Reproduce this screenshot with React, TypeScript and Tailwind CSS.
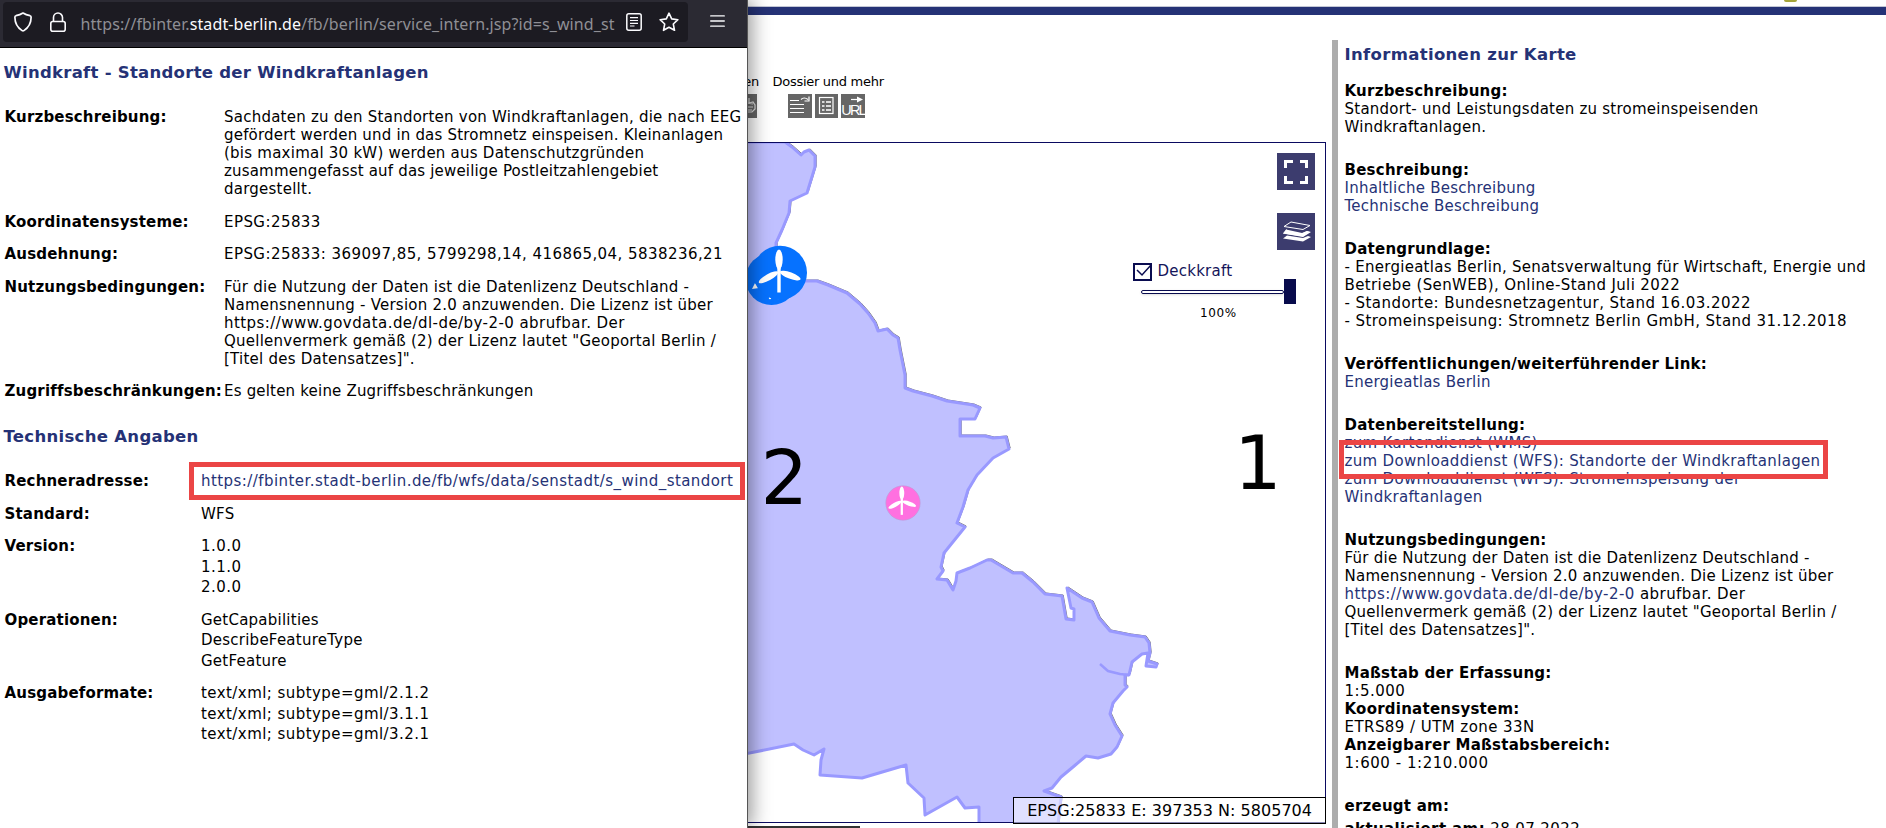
import type { ReactNode } from "react";

const land =
  "M740 142H785L792 147L801 155L804 152L809 150L815 156L815 167L811 180L807 193L790 201L789 213L782 230L776 243L776 275L805 281L817 281L828 285L847 293L860 304L868 313L875 323L878 331L887 329L893 335L898 338L900 350L903 365L905 375L905 388L913 391L932 396L947 401L973 405L980 408L975 419L960 419V436L985 436L993 438L1006 437L1009 449L993 458L977 475L968 490L963 507L957 523L965 527L944 553L941 567L943 571L937 579L947 580L953 590L956 581L957 573L970 568L987 560L991 560L1013 573L1022 573L1033 582L1045 594L1062 596L1066 619L1074 620V609L1071 608L1067 588L1082 598L1092 602L1099 618L1110 631L1130 635L1145 637L1149 643L1150 653L1148 661L1157 664L1156 667L1146 666L1148 653L1142 654L1132 662L1129 675H1125V685L1127 687L1123 691L1113 703L1110 714L1115 725L1122 736L1117 747L1111 754L1098 758L1086 756L1073 767L1061 777L1052 788L1044 791L1061 797L1058 824H979V807L965 808L957 797L925 815L924 798L908 783L906 765L862 778L820 775L821 760L824 749L814 755L803 750L794 744L740 755Z";

function Turbine() {
  return (
    <g fill="#fff">
      <ellipse cx="0" cy="-12" rx="3.7" ry="10" />
      <ellipse cx="0" cy="-12" rx="3.2" ry="11" transform="rotate(-119)" />
      <ellipse cx="0" cy="-12" rx="3.2" ry="11" transform="rotate(110)" />
      <rect x="-1.7" y="-4" width="3.4" height="25" />
    </g>
  );
}

function MapDrawing() {
  return (
    <svg className="absolute inset-0 h-full w-full" viewBox="747 143 578 679" preserveAspectRatio="none">
      <path d={land} fill="none" stroke="#777" strokeWidth="1" transform="translate(1.2 -1)" />
      <path d={land} fill="#c0c0ff" stroke="#9999ff" strokeWidth="3" strokeLinejoin="round" />
      <path d="M1100 664L1108 671L1120 674L1129 675" fill="none" stroke="#9999ff" strokeWidth="2.5" />
      <circle cx="771.5" cy="279" r="26" fill="#0672ff" />
      <path d="M752 289l3-6 4 5z" fill="#fff" />
      <path d="M756 262q-3 16 5 26t18 11" fill="none" stroke="#4d97ff" strokeWidth="0.8" />
      <circle cx="770" cy="298" r="1.2" fill="#fff" />
      <circle cx="780" cy="272.700" r="27" fill="#0672ff" />
      <g transform="translate(779 271.500)">
        <Turbine />
      </g>
      <circle cx="903" cy="503" r="17.200" fill="#ff70e0" stroke="#b8a0d8" strokeWidth="0.6" />
      <g transform="translate(901.800 501) scale(.66)">
        <Turbine />
      </g>
    </svg>
  );
}

function BrowserBar() {
  return (
    <div className="h-12 border-b border-black bg-[#2b2a33] pt-0.5 pl-[3px]">
      <div className="flex">
        <div className="flex h-10 w-[685px] items-center rounded-[4px] bg-[#1c1b22] pl-[11px] text-[#fbfbfe]">
          <svg className="h-5 w-[18px] shrink-0" viewBox="0 0 18 20" fill="none" stroke="currentColor" strokeWidth="1.700" strokeLinejoin="round">
            <path d="M9 1Q12 3 16 3.700Q17.200 4 17.100 5.500Q17 14 9.900 18.600Q9 19.200 8.100 18.600Q1 14 .9 5.500Q.8 4 2 3.700Q6 3 9 1Z" />
          </svg>
          <svg className="ml-[18px] h-5 w-4 shrink-0" viewBox="0 0 16 20" fill="none" stroke="currentColor" strokeWidth="1.600">
            <rect x=".8" y="9.500" width="14.400" height="9.700" rx="2" />
            <path d="M3.500 9.500V5.500a4.500 4.500 0 0 1 9 0v4" />
          </svg>
          <div className="ml-[14.500px] w-[536px] shrink-0 overflow-hidden pt-1 font-['Noto_Sans',sans-serif] text-[16px] leading-6 tracking-[0.1px] whitespace-nowrap text-[#8f8f95]">
            <span>https://fbinter.</span>
            <span className="text-[#fbfbfe]">stadt-berlin.de</span>
            <span>/fb/berlin/service_intern.jsp?id=s_wind_st</span>
          </div>
          <svg className="ml-[9px] h-[18px] w-4 shrink-0" viewBox="0 0 16 18" fill="none" stroke="currentColor" strokeWidth="1.500">
            <rect x=".8" y=".8" width="14.400" height="16.400" rx="2" />
            <path d="M4 4.700h8M4 7.500h8M4 10.300h8M4 13h4.500" strokeWidth="1.200" />
          </svg>
          <svg className="ml-[17px] h-5 w-5 shrink-0" viewBox="0 0 20 20" fill="none" stroke="currentColor" strokeWidth="1.600" strokeLinejoin="round">
            <path d="M10 1.200l2.700 5.700 6.200.8-4.600 4.300 1.200 6.300L10 15.200l-5.500 3.100L5.700 12 1.100 7.700l6.200-.8z" />
          </svg>
        </div>
        <svg className="mt-[13px] ml-[21.500px] h-3 w-[15px]" viewBox="0 0 15 12" stroke="#fbfbfe" strokeWidth="1.300" strokeLinecap="round">
          <path d="M.7.900h13.600M.7 6h13.600M.7 11.200h13.600" />
        </svg>
      </div>
    </div>
  );
}

function Row({ label, labelWidth, children }: { label: string; labelWidth: string; children: ReactNode }) {
  return (
    <div className="flex">
      <div className={`${labelWidth} shrink-0 font-bold tracking-[0.18px] whitespace-nowrap`}>{label}</div>
      <div className="whitespace-nowrap">{children}</div>
    </div>
  );
}

function Wide({ children }: { children: ReactNode }) {
  return <span className="tracking-[0.44px]">{children}</span>;
}

function Lines({ items }: { items: string[] }) {
  return (
    <div className="flex flex-col gap-[2.500px]">
      {items.map((t) => (
        <div key={t}>{t}</div>
      ))}
    </div>
  );
}

function ServiceWindow() {
  return (
    <div className="relative z-10 flex w-[748px] shrink-0 flex-col border-r border-[#555] bg-white shadow-[4px_0_18px_rgba(0,0,0,0.4)]">
      <BrowserBar />
      <h1 className="mt-[15px] ml-[3.500px] text-[16.500px] leading-5 font-bold tracking-[0.27px] whitespace-nowrap text-[#253276]">
        Windkraft - Standorte der Windkraftanlagen
      </h1>
      <div className="mt-[25px] ml-[4.500px] flex flex-col gap-[14.500px]">
        <Row label="Kurzbeschreibung:" labelWidth="w-[219.500px]">
          Sachdaten zu den Standorten von Windkraftanlagen, die nach EEG
          <br />
          <span className="tracking-[0.19px]">gefördert werden und in das Stromnetz einspeisen. Kleinanlagen</span>
          <br />
          (bis maximal 30 kW) werden aus Datenschutzgründen
          <br />
          <span className="tracking-[0.18px]">zusammengefasst auf das jeweilige Postleitzahlengebiet</span>
          <br />
          dargestellt.
        </Row>
        <Row label="Koordinatensysteme:" labelWidth="w-[219.500px]">
          <Wide>EPSG:25833</Wide>
        </Row>
        <Row label="Ausdehnung:" labelWidth="w-[219.500px]">
          <Wide>EPSG:25833: 369097,85, 5799298,14, 416865,04, 5838236,21</Wide>
        </Row>
        <Row label="Nutzungsbedingungen:" labelWidth="w-[219.500px]">
          Für die Nutzung der Daten ist die Datenlizenz Deutschland -
          <br />
          Namensnennung - Version 2.0 anzuwenden. Die Lizenz ist über
          <br />
          <Wide>https://www.govdata.de/dl-de/by-2-0 abrufbar. Der</Wide>
          <br />
          Quellenvermerk gemäß (2) der Lizenz lautet "Geoportal Berlin /
          <br />
          [Titel des Datensatzes]".
        </Row>
        <Row label="Zugriffsbeschränkungen:" labelWidth="w-[219.500px]">
          <span className="tracking-[0.19px]">Es gelten keine Zugriffsbeschränkungen</span>
        </Row>
      </div>
      <h2 className="mt-[27px] ml-[3.500px] text-[16.500px] leading-5 font-bold tracking-[0.3px] text-[#253276]">
        Technische Angaben
      </h2>
      <div className="mt-[25px] ml-[4.500px] flex flex-col gap-[14.500px]">
        <Row label="Rechneradresse:" labelWidth="w-[196.500px]">
          <span className="relative text-[#253276]">
            <Wide>https://fbinter.stadt-berlin.de/fb/wfs/data/senstadt/s_wind_standort</Wide>
            <span className="absolute -top-[10px] -left-[12.500px] h-[38px] w-[556px] border-[5px] border-[#eb4545]" />
          </span>
        </Row>
        <Row label="Standard:" labelWidth="w-[196.500px]">WFS</Row>
        <Row label="Version:" labelWidth="w-[196.500px]">
          <Wide>
            <Lines items={["1.0.0", "1.1.0", "2.0.0"]} />
          </Wide>
        </Row>
        <Row label="Operationen:" labelWidth="w-[196.500px]">
          <Lines items={["GetCapabilities", "DescribeFeatureType", "GetFeature"]} />
        </Row>
        <Row label="Ausgabeformate:" labelWidth="w-[196.500px]">
          <Wide>
            <Lines
              items={["text/xml; subtype=gml/2.1.2", "text/xml; subtype=gml/3.1.1", "text/xml; subtype=gml/3.2.1"]}
            />
          </Wide>
        </Row>
      </div>
    </div>
  );
}

function Toolbar() {
  return (
    <div className="h-[102px] pt-8">
      <div className="flex h-5 text-[13px] leading-5 tracking-[-0.28px] whitespace-nowrap">
        <div className="flex w-3 justify-end">en</div>
        <div className="ml-[13.500px]">Dossier und mehr</div>
      </div>
      <div className="mt-[2px] flex h-6">
        <svg className="w-[10px]" viewBox="0 0 10 24">
          <rect width="10" height="24" fill="#666" />
          <path d="M2 4v5l4-1 2 3v4l-3 3H1M0 9l6 1M0 13l6 0M0 16l5 0" fill="none" stroke="#ddd" strokeWidth="1.200" />
        </svg>
        <svg className="ml-[31px] w-6" viewBox="0 0 24 24" fill="none" stroke="#fff" strokeWidth="1.200">
          <rect width="24" height="24" fill="#666" stroke="none" />
          <path d="M2 6.500h9M2 10.500h14M2 14.500h14M2 18.500h14M13 5.500q3-3 7 0M16.500 7h4.500V2.500" />
        </svg>
        <svg className="ml-[3px] w-[23px]" viewBox="0 0 23 24" fill="none" stroke="#fff" strokeWidth="1.200">
          <rect width="23" height="24" fill="#666" stroke="none" />
          <rect x="4.500" y="3.500" width="13.500" height="16" />
          <path d="M7 8h2.500M7 12h2.500M7 16h2.500M11 8h5M11 12h5M11 16h5" strokeWidth="1.500" />
        </svg>
        <div className="ml-[3px] flex w-6 flex-col bg-[#666] text-white">
          <svg className="h-[9px] w-6" viewBox="0 0 24 9">
            <path d="M10 5.500h9" stroke="#fff" strokeWidth="1.200" />
            <path d="M16 2.500l6 3-6 3z" fill="#fff" />
          </svg>
          <div className="text-center font-['Liberation_Sans',sans-serif] text-[14.500px] leading-[15px] tracking-[-1.900px]">
            URL
          </div>
        </div>
      </div>
    </div>
  );
}

function MapPane() {
  return (
    <div className="relative flex h-[681px] w-[579px] flex-col items-end border border-l-0 border-[#0a0a60]">
      <MapDrawing />
      <div className="relative mt-[10px] mr-[10px] h-[37px] w-[38px] bg-[#3c3c6e]">
        <svg className="h-full w-full" viewBox="0 0 38 37" fill="none" stroke="#fff" strokeWidth="3">
          <path d="M8.500 15V8.500H16M23 8.500H29.500V15M29.500 23V29.500H23M16 29.500H8.500V23" />
        </svg>
      </div>
      <div className="relative mt-[23px] mr-[10px] h-[37px] w-[38px] bg-[#3c3c6e]">
        <svg className="h-full w-full" viewBox="0 0 38 37">
          <path d="M14 9l19 3.500-7 4L7 13.500z" fill="none" stroke="#fff" strokeWidth="1" />
          <path d="M10 16l-4 4.500L26 24l8-5-4-1-5 2.500L10 18z" fill="#fff" />
          <path d="M9 16.500l16 3.500 5-2 3 1-7 4.500-20-3z" fill="#fff" />
          <path d="M10 22.500l16 2.500 5-2 3 1-8 4.500-20-3z" fill="#fff" />
        </svg>
      </div>
      <div className="relative mt-[10px] mr-[29px] w-[163px] text-[#14145a]">
        <div className="flex h-6 items-center">
          <svg className="h-[18px] w-[19px]" viewBox="0 0 19 18" fill="none" stroke="#0a0c50">
            <rect x="1" y="1" width="17" height="16" strokeWidth="2" />
            <path d="M4 7l5 5 9-10" strokeWidth="1.500" />
          </svg>
          <span className="ml-[5.500px] -mt-0.5 leading-[18px]">Deckkraft</span>
        </div>
        <div className="mt-[-5px] ml-2 flex h-[25px] items-center">
          <div className="h-1 w-[143px] rounded-sm border border-[#0a0c50] bg-white shadow-sm" />
          <div className="h-[25px] w-3 bg-[#080b4c]" />
        </div>
        <div className="mt-px ml-[67px] text-[12px] leading-4 tracking-[0.6px] text-black">100%</div>
      </div>
      <span className="absolute top-[290px] left-[13.500px] text-[75px] leading-[90px] text-black">2</span>
      <span className="absolute top-[275px] left-[487px] text-[75px] leading-[90px] text-black">1</span>
      <div className="relative mt-auto -mr-px -mb-[2px] h-[27px] w-[313px] border border-black bg-white/50 pr-[13px] text-right text-[16px] leading-[26px] tracking-[0.02px] whitespace-nowrap">
        EPSG:25833 E: 397353 N: 5805704
      </div>
    </div>
  );
}

function Section({ title, children }: { title: string; children?: ReactNode }) {
  return (
    <div>
      <div className="font-bold">{title}</div>
      <div>{children}</div>
    </div>
  );
}

function InfoPanel() {
  return (
    <div className="h-[788px] flex-1 overflow-hidden border-l-[6px] border-[#adadad] pl-[6.500px] whitespace-nowrap">
      <h2 className="mt-[4.500px] text-[16.500px] leading-5 font-bold tracking-[0.33px] text-[#253276]">
        Informationen zur Karte
      </h2>
      <div className="mt-[17.500px] flex flex-col gap-[25px]">
        <Section title="Kurzbeschreibung:">
          Standort- und Leistungsdaten zu stromeinspeisenden
          <br />
          Windkraftanlagen.
        </Section>
        <Section title="Beschreibung:">
          <div className="text-[#253276]">
            Inhaltliche Beschreibung
            <br />
            Technische Beschreibung
          </div>
        </Section>
        <Section title="Datengrundlage:">
          <span className="tracking-[0.27px]">- Energieatlas Berlin, Senatsverwaltung für Wirtschaft, Energie und</span>
          <br />
          <span className="tracking-[0.38px]">Betriebe (SenWEB), Online-Stand Juli 2022</span>
          <br />
          <Wide>- Standorte: Bundesnetzagentur, Stand 16.03.2022</Wide>
          <br />
          <Wide>- Stromeinspeisung: Stromnetz Berlin GmbH, Stand 31.12.2018</Wide>
        </Section>
        <Section title="Veröffentlichungen/weiterführender Link:">
          <span className="text-[#253276]">Energieatlas Berlin</span>
        </Section>
        <Section title="Datenbereitstellung:">
          <div className="tracking-[0.32px] text-[#253276]">
            zum Kartendienst (WMS)
            <div className="relative">
              zum Downloaddienst (WFS): Standorte der Windkraftanlagen
              <div className="absolute -top-[12px] -left-[6px] h-[39px] w-[489px] border-[5px] border-[#eb4545]" />
            </div>
            zum Downloaddienst (WFS): Stromeinspeisung der
            <br />
            Windkraftanlagen
          </div>
        </Section>
        <Section title="Nutzungsbedingungen:">
          Für die Nutzung der Daten ist die Datenlizenz Deutschland -
          <br />
          Namensnennung - Version 2.0 anzuwenden. Die Lizenz ist über
          <br />
          <Wide>
            <span className="text-[#253276]">https://www.govdata.de/dl-de/by-2-0</span> abrufbar. Der
          </Wide>
          <br />
          Quellenvermerk gemäß (2) der Lizenz lautet "Geoportal Berlin /
          <br />
          [Titel des Datensatzes]".
        </Section>
        <div>
          <Section title="Maßstab der Erfassung:">
            <Wide>1:5.000</Wide>
          </Section>
          <Section title="Koordinatensystem:">
            <Wide>ETRS89 / UTM zone 33N</Wide>
          </Section>
          <Section title="Anzeigbarer Maßstabsbereich:">
            <span className="tracking-[0.54px]">1:600 - 1:210.000</span>
          </Section>
        </div>
        <div>
          <div className="font-bold">erzeugt am:</div>
          <div className="mt-[5px] tracking-[0.4px]">
            <b>aktualisiert am:</b> 28.07.2022
          </div>
        </div>
      </div>
    </div>
  );
}

export default function App() {
  return (
    <div className="flex h-[828px] w-[1886px] overflow-hidden bg-white font-['DejaVu_Sans',sans-serif] text-[15px] leading-[18px] tracking-[0.24px] text-black">
      <ServiceWindow />
      <div className="-ml-px flex flex-1 flex-col">
        <div className="flex h-[15px] flex-col items-end border-b-8 border-[#253276]">
          <div className="mr-[89px] h-0.5 w-[13px] rounded-b-full bg-[#a5a53a]" />
          <div className="mt-1 h-px w-full shrink-0 bg-[#c3c7d6]" />
        </div>
        <div className="flex">
          <div className="w-[585px] pt-[25px]">
            <Toolbar />
            <MapPane />
            <div className="mt-[3px] h-0.5 w-[113px] bg-[#333]" />
          </div>
          <div className="flex flex-1 pt-[25px]">
            <InfoPanel />
          </div>
        </div>
      </div>
    </div>
  );
}
